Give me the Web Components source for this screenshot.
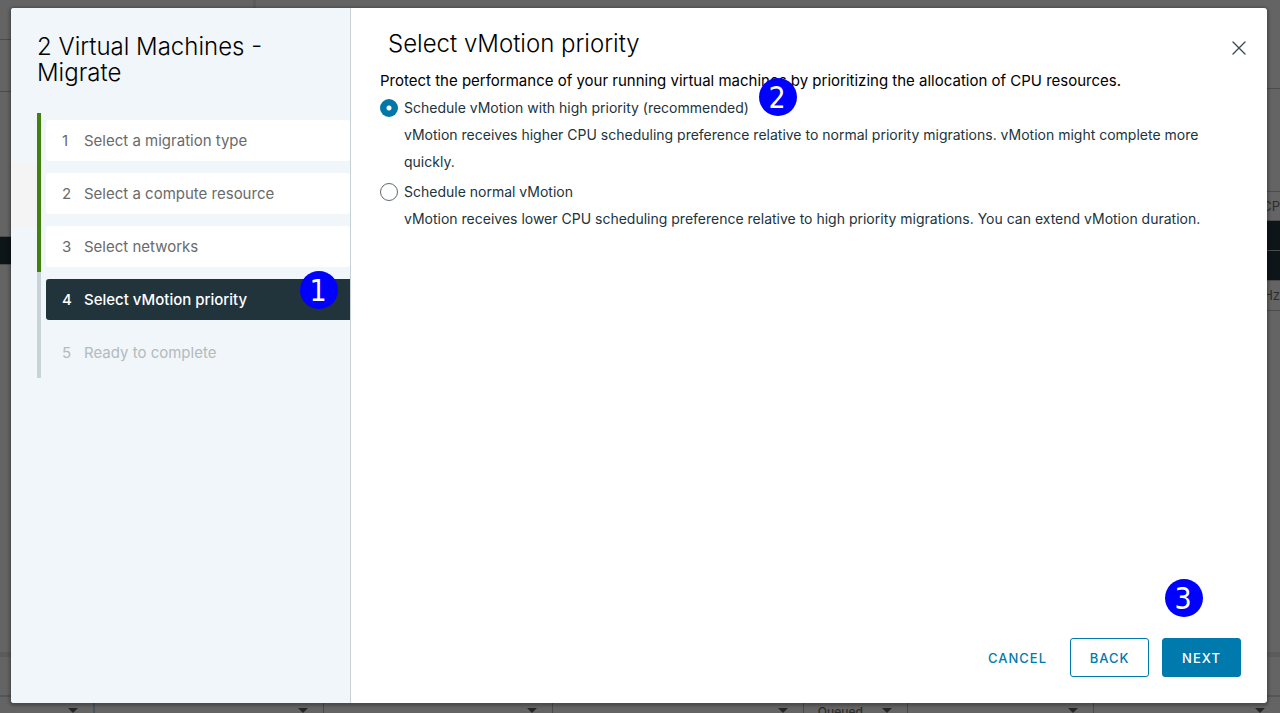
<!DOCTYPE html>
<html lang="en">
<head>
<meta charset="utf-8">
<title>2 Virtual Machines - Migrate</title>
<style>
  html, body { height: 100%; }
  body { margin: 0; font-family: Inter, "Open Sans", sans-serif; color: #000; overflow: hidden; }
</style>
</head>
<body>
<app-screen>
  <dimmed-workspace slot="backdrop"></dimmed-workspace>
  <wizard-dialog heading="Select vMotion priority">
    <wizard-nav slot="nav" heading="2 Virtual Machines - Migrate">
      <wizard-step number="1" state="done">Select a migration type</wizard-step>
      <wizard-step number="2" state="done">Select a compute resource</wizard-step>
      <wizard-step number="3" state="done">Select networks</wizard-step>
      <wizard-step number="4" state="current">Select vMotion priority
        <callout-marker slot="marker">1</callout-marker></wizard-step>
      <wizard-step number="5" state="pending">Ready to complete</wizard-step>
    </wizard-nav>
    <priority-form>
      <callout-marker slot="marker">2</callout-marker>
    </priority-form>
    <wizard-actions slot="footer">
      <callout-marker slot="marker">3</callout-marker>
    </wizard-actions>
  </wizard-dialog>
</app-screen>

<script>
const define = (name, html, setup) => {
  const template = document.createElement('template');
  template.innerHTML = html;
  customElements.define(name, class extends HTMLElement {
    constructor() {
      super();
      this.attachShadow({ mode: 'open' }).append(template.content.cloneNode(true));
    }
    connectedCallback() { if (setup) setup(this, this.shadowRoot); }
  });
};

/* Backdrop and dialog share one grid cell. */
define('app-screen', `
  <style>
    :host { display: grid; min-height: 100%; background: #646464; }
    slot[name=backdrop]::slotted(*), slot:not([name])::slotted(*) { grid-area: 1 / 1; min-width: 0; }
    slot:not([name])::slotted(*) { margin: 8px 13px 10px 11px; z-index: 1; }
  </style>
  <slot name="backdrop"></slot><slot></slot>`);

/* The dimmed client behind the dialog: only its edges stay visible. */
define('dimmed-workspace', `
  <style>
    :host { display: flex; flex-direction: column; overflow: hidden; color: #2c2c2c; font-size: 13px; }
    .top { height: 8px; flex: none; border-right: 3px solid #5c5c5c; width: 253px; }
    .middle { flex: 1; display: flex; justify-content: space-between; }
    .side { width: 13px; display: flex; flex-direction: column; white-space: nowrap; }
    .side > div { box-sizing: border-box; flex: none; border-bottom: 1px solid #4c4c4c; }
    .side > .dark { background: #0d1518; border-color: #4c4c4c; }
    .side > .rest { flex: 1; border-bottom: 5px solid #5b5b5b; }
    .side > .last { height: 40px; border-bottom: 2px solid #50565a; }
    .side > .end { display: flex; justify-content: flex-end; }
    .foot { height: 16px; flex: none; display: grid; grid-template-columns: 95px 229px 229px 251px 104px 186px 1fr; }
    .foot div { box-sizing: border-box; border-right: 1px solid #4a4a4a; display: flex; align-items: flex-start;
      justify-content: flex-end; gap: 19px; padding: 6px 15px 0 0; line-height: 15px; font-weight: 500; }
    .foot div:first-child { border-right: 2px solid #4c5357; }
    .foot div:last-child { border-right: 0; }
    .foot i { border: 5px solid transparent; border-top-color: #262626; margin-top: 5px; }
    .foot span { font-size: 12px; margin-top: 1px; }
  </style>
  <div class="top"></div>
  <div class="middle">
    <div class="side">
      <div style="height:32px"></div><div style="height:52px"></div><div style="height:145px"></div>
      <div class="dark" style="height:28px"></div><div class="rest"></div><div class="last"></div>
    </div>
    <div class="side">
      <div style="height:81px"></div><div style="height:103px"></div>
      <div class="end" style="height:29px;line-height:29px">CP</div>
      <div class="dark" style="height:30px"></div><div class="dark" style="height:30px"></div>
      <div class="end" style="height:30px;line-height:29px">Hz</div>
      <div class="rest"></div><div class="last"></div>
    </div>
  </div>
  <div class="foot"><div><i></i></div><div><i></i></div><div><i></i></div><div><i></i></div>
    <div><span>Queued</span><i></i></div><div><i></i></div><div><i></i></div></div>`);

define('callout-marker', `
  <style>
    :host { display: block; box-sizing: border-box; width: 38px; height: 38px; padding-right: 2px; border-radius: 50%;
      background: #00f; color: #fff; font: 30px/40px "DejaVu Sans Condensed", "DejaVu Sans", sans-serif; text-align: center; }
  </style><slot></slot>`);

define('wizard-dialog', `
  <style>
    :host { display: grid; grid-template-columns: 340px minmax(0, 1fr); background: #fff; border-radius: 3px;
      box-shadow: 0 1px 3px 2px rgba(0, 0, 0, .25); overflow: clip; overflow-clip-margin: 6px; }
    section { display: flex; flex-direction: column; padding: 22px 26px 26px 29px; }
    header { display: flex; justify-content: space-between; align-items: flex-start; padding-left: 8px; }
    h2 { margin: 0; font-size: 24px; line-height: 28px; font-weight: 300; }
    header button { border: 0; background: none; padding: 10px 0 0 0; width: 16px; height: 26px; margin-right: -6px; display: block; }
    svg { display: block; width: 16px; height: 16px; }
    main { flex: 1; }
  </style>
  <slot name="nav"></slot>
  <section>
    <header><h2></h2>
      <button type="button" aria-label="Close"><svg viewBox="0 0 16 16" fill="none" stroke="#3b4e58" stroke-width="1.4" stroke-linecap="round"><path d="M2 2 14 14M14 2 2 14"/></svg></button>
    </header>
    <main><slot></slot></main>
    <slot name="footer"></slot>
  </section>`, (el, root) => { root.querySelector('h2').textContent = el.getAttribute('heading'); });

define('wizard-nav', `
  <style>
    :host { display: block; border-right: 1px solid #c8d1d6; border-radius: 3px 0 0 3px; padding: 26px 0 0 26px;
      background: linear-gradient(#f4f4f4, #f4f4f4) 0 155px / 26px 64px no-repeat #f0f6f9; }
    h1 { margin: 0 64px 27px 0; font-size: 24px; line-height: 26px; font-weight: 300; }
  </style>
  <h1></h1><nav aria-label="Steps"><slot></slot></nav>`,
  (el, root) => { root.querySelector('h1').textContent = el.getAttribute('heading'); });

define('wizard-step', `
  <style>
    :host { display: block; position: relative; border-left: 4px solid #c8d3d8; padding: 7px 0 5px 5px; }
    :host([state=done]) { border-color: #42810e; }
    button { display: grid; grid-template-columns: 10px 1fr; gap: 12px; width: 100%; height: 41px; padding: 0 0 0 16px;
      align-items: center; text-align: left; border: 0; border-radius: 3px 0 0 3px; background: none;
      font: 400 15px/24px Inter, sans-serif; color: #6a6a6a; white-space: nowrap; }
    :host([state=done]) button { background: #fff; border-radius: 3px; }
    :host([state=current]) button { background: #21333b; color: #fff; font-weight: 500; }
    :host([state=pending]) button { color: #b4babd; }
    slot[name=marker]::slotted(*) { position: absolute; top: -1px; right: 12px; }
  </style>
  <button type="button"><span id="n"></span><span><slot></slot></span></button><slot name="marker"></slot>`,
  (el, root) => {
    root.getElementById('n').textContent = el.getAttribute('number');
    root.querySelector('button').disabled = el.getAttribute('state') === 'pending';
  });

define('priority-form', `
  <style>
    :host { display: block; padding-top: 11px; font-size: 14px; color: #21333b; }
    p { margin: 0; font-size: 15px; line-height: 24px; color: #000; }
    .option { position: relative; display: grid; grid-template-columns: 18px minmax(0, 1fr); column-gap: 6px;
      align-items: center; padding-top: 2px; }
    .option + .option { padding-top: 4px; }
    label { line-height: 26px; }
    .hint { grid-column: 2; line-height: 27px; }
    input { appearance: none; box-sizing: border-box; margin: 0; width: 18px; height: 18px; border-radius: 50%;
      border: 1px solid #5e6a70; background: #fff; }
    input:checked { border: 0; background: radial-gradient(circle, #fff 2px, #0077a8 3px); }
    slot[name=marker]::slotted(*) { position: absolute; top: -15px; left: 379px; }
  </style>
  <p id="lead">Protect the performance of your running virtual machines by prioritizing the allocation of CPU resources.</p>
  <div role="radiogroup" aria-labelledby="lead">
    <div class="option">
      <input type="radio" name="priority" id="high" aria-describedby="high-hint" checked>
      <label for="high">Schedule vMotion with high priority (recommended)</label>
      <div class="hint" id="high-hint">vMotion receives higher CPU scheduling preference relative to normal priority migrations. vMotion might complete more quickly.</div>
      <slot name="marker"></slot>
    </div>
    <div class="option">
      <input type="radio" name="priority" id="normal" aria-describedby="normal-hint">
      <label for="normal">Schedule normal vMotion</label>
      <div class="hint" id="normal-hint">vMotion receives lower CPU scheduling preference relative to high priority migrations. You can extend vMotion duration.</div>
    </div>
  </div>`);

define('wizard-actions', `
  <style>
    :host { display: flex; justify-content: flex-end; gap: 13px; position: relative; }
    button { box-sizing: border-box; min-width: 79px; height: 39px; padding: 0 8px; border: 1px solid #0079ad; border-radius: 3px;
      background: #fff; color: #0079ad; font: 500 13px/24px Inter, sans-serif; letter-spacing: 1px; text-transform: uppercase; }
    .link { border-color: transparent; }
    .primary { background: #0079ad; color: #fff; }
    slot[name=marker]::slotted(*) { position: absolute; top: -59px; right: 38px; }
  </style>
  <button type="button" class="link">Cancel</button>
  <button type="button">Back</button>
  <button type="button" class="primary">Next</button>
  <slot name="marker"></slot>`);
</script>
</body>
</html>
